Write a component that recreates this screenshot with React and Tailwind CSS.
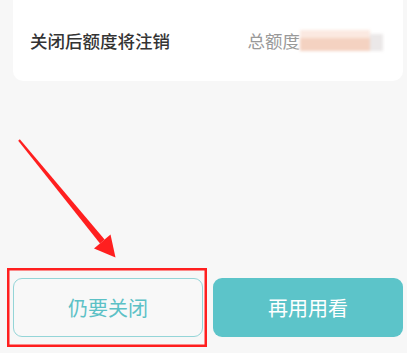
import React from "react"

const cjk = { fontFamily: '"Noto Sans CJK SC", "Noto Sans", sans-serif' }

const Annotation = () => (
  <svg className="absolute inset-0 pointer-events-none" width="407" height="353" viewBox="0 0 407 353">
    {/* arrow shaft */}
    <polygon points="18.2,140.7 19.8,139.3 104.6,239.6 100,243.4" fill="#ff1f1f" />
    {/* arrow head */}
    <polygon points="115.5,257.5 110.5,234.5 94,248.5" fill="#ff1f1f" />
    {/* highlight box */}
    <rect x="8.25" y="269.25" width="197.5" height="76.5" fill="none" stroke="#ff1f1f" strokeWidth="2.5" />
  </svg>
)

const App = () => {
  return (
    <div className="flex w-[411px] h-[353px] overflow-hidden bg-white" style={cjk}>
      <div className="relative w-[407px] h-full bg-[#f7f7f7] flex flex-col">
        {/* card */}
        <div className="ml-[13px] mr-[4px] h-[81px] bg-white rounded-b-[10px] flex items-center justify-between pl-[17px] pr-[20px]">
          <span className="text-[17.5px] font-medium text-[#333333] leading-none">关闭后额度将注销</span>
          <div className="flex items-center">
            <span className="text-[17.5px] text-[#999999] leading-none">总额度</span>
            <div className="relative w-[83px] h-[21px] blur-[1.5px]">
              <div className="absolute left-0 top-0 w-[70px] h-[8px] bg-[#fbe9e1]" />
              <div className="absolute left-0 top-[8px] w-[70px] h-[13px] bg-[#f4d2c1]" />
              <div className="absolute left-[70px] top-[4px] w-[13px] h-[17px] bg-[#ebe8e8]" />
            </div>
          </div>
        </div>

        {/* buttons */}
        <div className="mt-[197px] ml-[13px] mr-[4px] flex gap-[10px]">
          <button className="w-[190px] h-[59px] rounded-[9px] border-[1.5px] border-[#94d5d8] bg-[#f8f8f8] text-[20px] text-[#5cc1c6] flex items-center justify-center">
            仍要关闭
          </button>
          <button className="w-[190px] h-[59px] rounded-[9px] bg-[#5cc4c9] text-[20px] text-white flex items-center justify-center">
            再用用看
          </button>
        </div>

        <Annotation />
      </div>
      <div className="w-[4px] h-full bg-white" />
    </div>
  )
}

export default App
